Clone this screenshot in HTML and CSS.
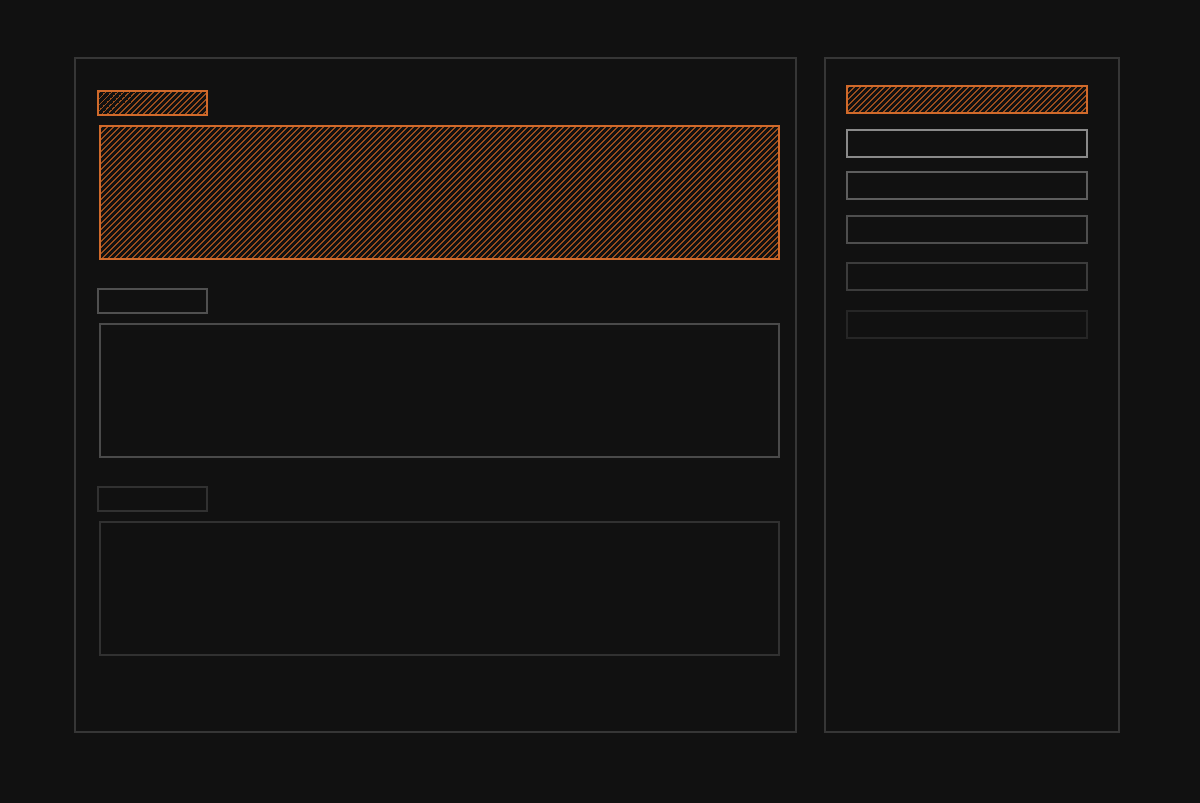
FILE: index.html
```html
<!DOCTYPE html>
<html lang="en">
<head>
<meta charset="utf-8">
<title>Wireframe</title>
<link rel="stylesheet" href="styles.css">
</head>
<body>
<div class="page">
  <main class="main-panel">
    <section class="section section-active">
      <div class="label"></div>
      <div class="block"></div>
    </section>
    <section class="section section-mid">
      <div class="label"></div>
      <div class="block"></div>
    </section>
    <section class="section section-dim">
      <div class="label"></div>
      <div class="block"></div>
    </section>
  </main>
  <aside class="side-panel">
    <div class="item item-active"></div>
    <div class="item item-1"></div>
    <div class="item item-2"></div>
    <div class="item item-3"></div>
    <div class="item item-4"></div>
    <div class="item item-5"></div>
  </aside>
</div>
</body>
</html>
```
FILE: styles.css
```css
html, body {
  margin: 0;
  padding: 0;
  background: #111111;
  font-family: "Liberation Sans", Arial, sans-serif;
}

.page {
  display: flex;
  align-items: flex-start;
  gap: 27px;
  padding: 57px 0 0 74px;
}

.main-panel {
  box-sizing: border-box;
  width: 723px;
  height: 676px;
  border: 2px solid #363636;
  padding: 31px 15px 0 21px;
  display: flex;
  flex-direction: column;
  gap: 28px;
}

.section {
  display: flex;
  flex-direction: column;
  gap: 9px;
}

.label {
  box-sizing: border-box;
  width: 111px;
  height: 26px;
  border: 2px solid #505050;
}

.block {
  box-sizing: border-box;
  margin-left: 2px;
  height: 135px;
  border: 2px solid #4a4a4a;
}

.section-dim .label,
.section-dim .block {
  border-color: #313131;
}

.side-panel {
  box-sizing: border-box;
  width: 296px;
  height: 676px;
  border: 2px solid #363636;
  padding: 26px 30px 0 20px;
  display: flex;
  flex-direction: column;
}

.item {
  box-sizing: border-box;
  height: 29px;
  border: 2px solid #444;
}

.item-1 { margin-top: 15px; border-color: #8a8a8a; }
.item-2 { margin-top: 13px; border-color: #5e5e5e; }
.item-3 { margin-top: 15px; border-color: #4e4e4e; }
.item-4 { margin-top: 18px; border-color: #3c3c3c; }
.item-5 { margin-top: 19px; border-color: #262626; }

.section-active .label,
.section-active .block,
.item.item-active {
  border-color: #d06a2b;
  background-image: repeating-linear-gradient(
    135deg,
    #9c4e1d 0 1.1px,
    transparent 1.1px 4.24264px
  );
}
```
